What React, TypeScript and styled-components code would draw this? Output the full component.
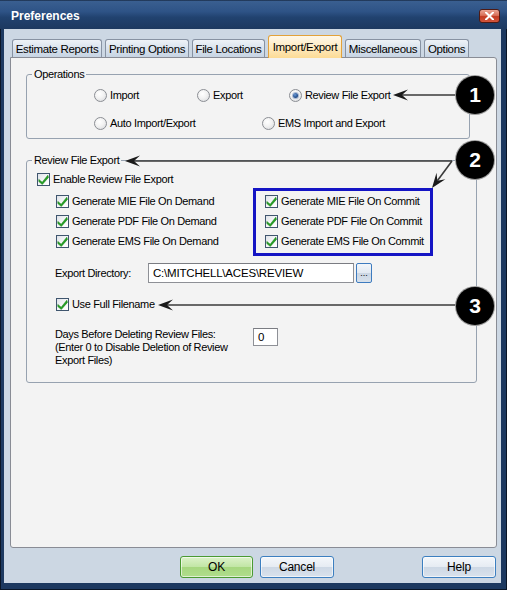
import React from "react";
import styled, { createGlobalStyle, css } from "styled-components";

const GlobalStyle = createGlobalStyle`
  html, body { margin: 0; padding: 0; background: #ffffff; }
  body {
    font-family: "Liberation Sans", Arial, sans-serif;
    font-size: 11px;
    letter-spacing: -0.35px;
    color: #000;
  }
  * { box-sizing: border-box; }
`;

const Window = styled.div`
  position: relative;
  width: 507px;
  height: 590px;
  background: #1d3960;
  box-shadow: inset 0 0 0 1px #0a1526;
  display: flex;
  flex-direction: column;
  overflow: hidden;
`;

const TitleBar = styled.div`
  height: 29px;
  flex: none;
  display: flex;
  align-items: center;
  justify-content: space-between;
  padding: 3px 7px 0 11px;
  background: linear-gradient(to bottom, #0b1628 0px, #3a5f90 1px, #2e5386 40%, #21426f 60%, #1d3960 100%);
`;

const Title = styled.span`
  color: #ffffff;
  font-weight: bold;
  font-size: 12px;
  letter-spacing: 0;
`;

const CloseButton = styled.div`
  width: 21px;
  height: 14px;
  border-radius: 3px;
  border: 1px solid #4e1a14;
  background: linear-gradient(to bottom, #eaa696 0%, #d9705a 45%, #c23a22 55%, #d2563d 100%);
  display: flex;
  align-items: center;
  justify-content: center;
`;

const Frame = styled.div`
  flex: 1;
  margin: 0 6px 7px 4px;
  background: #ccd7e3;
  display: flex;
  flex-direction: column;
  padding: 6px 4px 5px 6px;
`;

const TabRow = styled.div`
  display: flex;
  align-items: flex-end;
  height: 22px;
  padding-left: 2px;
  gap: 3px;
  position: relative;
  z-index: 1;
`;

const Tab = styled.div<{ $w: number; $active?: boolean }>`
  width: ${(p) => p.$w}px;
  height: 18px;
  border: 1px solid #8792a2;
  border-bottom: none;
  border-radius: 3px 3px 0 0;
  background: linear-gradient(to bottom, #eef2f7 0%, #dbe4ee 45%, #c7d4e3 100%);
  display: flex;
  align-items: center;
  justify-content: center;
  white-space: nowrap;
  font-size: 11.5px;
  ${(p) =>
    p.$active &&
    css`
      height: 23px;
      margin-bottom: -1px;
      border-color: #e3a23a;
      background: linear-gradient(to bottom, #fff8ea 0%, #feecc6 45%, #fcdb95 100%);
    `}
`;

const Panel = styled.div`
  flex: 1;
  background: #f3f3f3;
  border: 1px solid #898c95;
  border-radius: 0 3px 3px 3px;
  padding: 16px 0 0 15px;
  display: flex;
  flex-direction: column;
  align-items: flex-start;
`;

const Group = styled.div<{ $w: number; $gapTop?: number }>`
  position: relative;
  width: ${(p) => p.$w}px;
  margin-top: ${(p) => p.$gapTop ?? 0}px;
  border: 1px solid #97a2b0;
  border-radius: 3px;
`;

const Caption = styled.span`
  position: absolute;
  left: 5px;
  top: -7px;
  padding: 0 2px;
  line-height: 13px;
  background: #f3f3f3;
`;

const OpsBody = styled.div`
  padding: 10px 0 5px 67px;
  display: flex;
  flex-direction: column;
  gap: 8px;
`;

const OptRow = styled.div`
  display: flex;
  height: 20px;
  align-items: center;
`;

const Option = styled.label<{ $w?: number }>`
  display: flex;
  align-items: center;
  gap: 3px;
  white-space: nowrap;
  width: ${(p) => (p.$w ? `${p.$w}px` : "auto")};
`;

const RadioCircle = styled.span<{ $on?: boolean }>`
  width: 13px;
  height: 13px;
  flex: none;
  border-radius: 50%;
  border: 1px solid #8b8e94;
  background: radial-gradient(circle at 40% 35%, #ffffff 0%, #f2f2f2 45%, #d4d6da 100%);
  display: flex;
  align-items: center;
  justify-content: center;
  &::after {
    content: "";
    display: ${(p) => (p.$on ? "block" : "none")};
    width: 5px;
    height: 5px;
    border-radius: 50%;
    background: radial-gradient(circle at 40% 35%, #6d9ad6 0%, #24508f 60%, #153368 100%);
    box-shadow: 0 0 0 1px rgba(40, 80, 150, 0.35);
  }
`;

const ReviewBody = styled.div`
  padding: 9px 0 15px 0;
  display: flex;
  flex-direction: column;
`;

const Row = styled.div<{ $h: number; $left: number; $top?: number }>`
  display: flex;
  align-items: center;
  height: ${(p) => p.$h}px;
  padding-left: ${(p) => p.$left}px;
  margin-top: ${(p) => p.$top ?? 0}px;
  white-space: nowrap;
`;

const Columns = styled.div`
  display: flex;
  margin-left: 17px;
`;

const Column = styled.div<{ $w: number; $highlight?: boolean }>`
  width: ${(p) => p.$w}px;
  border: 3px solid ${(p) => (p.$highlight ? "#1414c4" : "transparent")};
  padding: 0 0 2px 9px;
  display: flex;
  flex-direction: column;
`;

const CheckRow = styled.label`
  display: flex;
  align-items: center;
  gap: 3px;
  height: 20px;
  white-space: nowrap;
`;

const CheckInline = styled.label`
  display: flex;
  align-items: center;
  gap: 3px;
  white-space: nowrap;
`;

const Box = styled.span`
  width: 13px;
  height: 13px;
  flex: none;
  border: 1px solid #3f556e;
  background: linear-gradient(135deg, #dfe3e8 0%, #f4f5f7 50%, #ffffff 100%);
  display: flex;
  align-items: center;
  justify-content: center;
`;

const DirLabel = styled.span`
  width: 93px;
`;

const TextBox = styled.div<{ $w: number; $h: number }>`
  width: ${(p) => p.$w}px;
  height: ${(p) => p.$h}px;
  background: #ffffff;
  border: 1px solid #8e9096;
  border-top-color: #7a7c82;
  padding: 0 4px;
  display: flex;
  align-items: center;
  font-size: 11.5px;
  letter-spacing: -0.2px;
`;

const BrowseButton = styled.div`
  width: 16px;
  height: 20px;
  margin-left: 2px;
  border: 1px solid #3d7bbf;
  border-radius: 2px;
  background: linear-gradient(to bottom, #f3f6fa 0%, #e2e9f1 50%, #cbd6e3 51%, #d8e1eb 100%);
  display: flex;
  align-items: flex-end;
  justify-content: center;
  padding-bottom: 4px;
  font-size: 9px;
  line-height: 9px;
  letter-spacing: 0;
`;

const DaysRow = styled.div`
  display: flex;
  align-items: flex-start;
  margin-top: 15px;
  padding-left: 28px;
`;

const DaysText = styled.div`
  width: 198px;
  line-height: 13px;
`;

const ButtonRow = styled.div`
  display: flex;
  height: 22px;
  margin-top: 8px;
  padding: 0 1px 0 170px;
  gap: 7px;
`;

const Spacer = styled.div`
  flex: 1;
`;

const DialogButton = styled.div<{ $w: number; $primary?: boolean }>`
  width: ${(p) => p.$w}px;
  height: 22px;
  border-radius: 3px;
  display: flex;
  align-items: center;
  justify-content: center;
  font-size: 12px;
  letter-spacing: -0.2px;
  border: 1px solid #3c7fc0;
  background: linear-gradient(to bottom, #f4f7fb 0%, #e6ecf3 48%, #cdd8e5 52%, #d9e2ec 100%);
  box-shadow: inset 0 0 0 1px rgba(255, 255, 255, 0.6);
  ${(p) =>
    p.$primary &&
    css`
      border-color: #4a9a32;
      background: linear-gradient(to bottom, #dcf2c9 0%, #c2e6a6 48%, #a6d77f 52%, #b0dd8c 100%);
    `}
`;

const Overlay = styled.svg`
  position: absolute;
  left: 0;
  top: 0;
  width: 507px;
  height: 590px;
  pointer-events: none;
`;

const Badge = styled.div<{ $x: number; $y: number }>`
  position: absolute;
  left: ${(p) => p.$x - 19}px;
  top: ${(p) => p.$y - 19}px;
  width: 38px;
  height: 38px;
  border-radius: 50%;
  background: #000000;
  box-shadow: 0 0 0 1px #9a9a9a;
  color: #ffffff;
  font-family: "Liberation Sans", Arial, sans-serif;
  font-weight: bold;
  font-size: 21px;
  letter-spacing: 0;
  display: flex;
  align-items: center;
  justify-content: center;
`;

const CheckMark = () => (
  <svg width="11" height="11" viewBox="0 0 11 11">
    <path d="M0.8 5.4 L4.2 8.2 L9.8 1.2 L10.5 3.4 L4.3 10.5 L0.8 7.6 Z" fill="#23a023" stroke="#177a17" strokeWidth="0.5" />
  </svg>
);

const Check: React.FC<{ label: string }> = ({ label }) => (
  <CheckRow>
    <Box>
      <CheckMark />
    </Box>
    {label}
  </CheckRow>
);

const Radio: React.FC<{ label: string; on?: boolean; w?: number }> = ({ label, on, w }) => (
  <Option $w={w}>
    <RadioCircle $on={on} />
    {label}
  </Option>
);

function arrow(tx: number, ty: number, fx: number, fy: number) {
  const a = Math.atan2(fy - ty, fx - tx);
  const c = Math.cos(a);
  const s = Math.sin(a);
  const pt = (d: number, w: number) => `${(tx + d * c - w * s).toFixed(2)},${(ty + d * s + w * c).toFixed(2)}`;
  const head = `M${tx},${ty} L${pt(15, -5.5)} L${pt(9, 0)} L${pt(15, 5.5)} Z`;
  const back = pt(9, 0);
  return (
    <g key={`${tx}-${ty}-${fx}-${fy}`}>
      <path d={`M${fx},${fy} L${back}`} stroke="#3a3a3a" strokeWidth="1.6" fill="none" />
      <path d={head} fill="#1a1a1a" />
    </g>
  );
}

const tabs = [
  { label: "Estimate Reports", w: 90 },
  { label: "Printing Options", w: 84 },
  { label: "File Locations", w: 73 },
  { label: "Import/Export", w: 74, active: true },
  { label: "Miscellaneous", w: 76 },
  { label: "Options", w: 45 },
];

export default function App() {
  return (
    <>
      <GlobalStyle />
      <Window>
        <TitleBar>
          <Title>Preferences</Title>
          <CloseButton>
            <svg width="9" height="8" viewBox="0 0 9 8">
              <path d="M1 0.5 L8 7.5 M8 0.5 L1 7.5" stroke="#ffffff" strokeWidth="2" strokeLinecap="square" />
            </svg>
          </CloseButton>
        </TitleBar>
        <Frame>
          <TabRow>
            {tabs.map((t) => (
              <Tab key={t.label} $w={t.w} $active={t.active}>
                {t.label}
              </Tab>
            ))}
          </TabRow>
          <Panel>
            <Group $w={444}>
              <Caption>Operations</Caption>
              <OpsBody>
                <OptRow>
                  <Radio label="Import" w={103} />
                  <Radio label="Export" w={92} />
                  <Radio label="Review File Export" on />
                </OptRow>
                <OptRow>
                  <Radio label="Auto Import/Export" w={168} />
                  <Radio label="EMS Import and Export" />
                </OptRow>
              </OpsBody>
            </Group>
            <Group $w={451} $gapTop={21}>
              <Caption>Review File Export</Caption>
              <ReviewBody>
                <Row $h={18} $left={10}>
                  <CheckInline>
                    <Box>
                      <CheckMark />
                    </Box>
                    Enable Review File Export
                  </CheckInline>
                </Row>
                <Columns>
                  <Column $w={209}>
                    <Check label="Generate MIE File On Demand" />
                    <Check label="Generate PDF File On Demand" />
                    <Check label="Generate EMS File On Demand" />
                  </Column>
                  <Column $w={180} $highlight>
                    <Check label="Generate MIE File On Commit" />
                    <Check label="Generate PDF File On Commit" />
                    <Check label="Generate EMS File On Commit" />
                  </Column>
                </Columns>
                <Row $h={20} $left={28} $top={7}>
                  <DirLabel>Export Directory:</DirLabel>
                  <TextBox $w={206} $h={20}>C:\MITCHELL\ACES\REVIEW</TextBox>
                  <BrowseButton>...</BrowseButton>
                </Row>
                <Row $h={18} $left={29} $top={12}>
                  <CheckInline>
                    <Box>
                      <CheckMark />
                    </Box>
                    Use Full Filename
                  </CheckInline>
                </Row>
                <DaysRow>
                  <DaysText>
                    Days Before Deleting Review Files:
                    <br />
                    (Enter 0 to Disable Deletion of Review
                    <br />
                    Export Files)
                  </DaysText>
                  <TextBox $w={25} $h={18}>0</TextBox>
                </DaysRow>
              </ReviewBody>
            </Group>
          </Panel>
          <ButtonRow>
            <DialogButton $w={73} $primary>OK</DialogButton>
            <DialogButton $w={74}>Cancel</DialogButton>
            <Spacer />
            <DialogButton $w={74}>Help</DialogButton>
          </ButtonRow>
        </Frame>
        <Overlay viewBox="0 0 507 590">
          {arrow(393, 95, 457, 95)}
          {arrow(125, 161, 452, 161)}
          {arrow(432, 188, 452, 161)}
          {arrow(158, 305, 457, 305)}
        </Overlay>
        <Badge $x={475} $y={95}>1</Badge>
        <Badge $x={475} $y={160}>2</Badge>
        <Badge $x={475} $y={306}>3</Badge>
      </Window>
    </>
  );
}
